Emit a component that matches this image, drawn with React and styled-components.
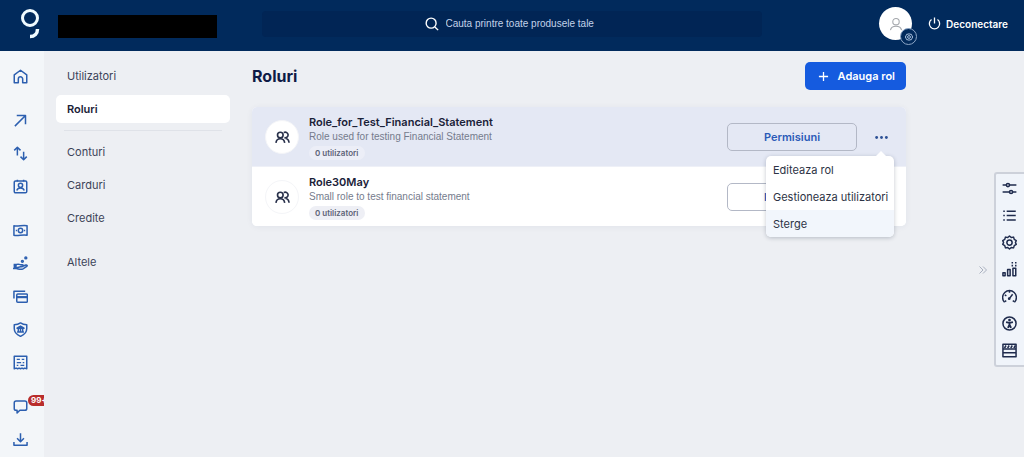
import { useState } from 'react';
import styled, { createGlobalStyle } from 'styled-components';

const GlobalStyle = createGlobalStyle`
    *, *::before, *::after {
        box-sizing: border-box;
    }
    body {
        margin: 0;
        background: #edeff3;
        color: #1d2540;
        font-family: Inter, "Liberation Sans", sans-serif;
        font-size: 12px;
    }
    button, input {
        font: inherit;
        color: inherit;
    }
    button {
        cursor: pointer;
    }
    a {
        color: inherit;
        text-decoration: none;
    }
    ul {
        list-style: none;
        margin: 0;
        padding: 0;
    }
`

const icons = {
    home: <path d="M2 9.500 12 2l10 7.500V22h-6.500v-6a3.500 3.500 0 0 0-7 0v6H2Z" />,
    arrow: <path d="M3 21 20 4M6 4h14v14" />,
    transfer: <path d="M7 15V2M2 7l5-5 5 5M17 9v13M12 17l5 5 5-5" />,
    contact: (
        <>
            <rect x="2" y="3" width="20" height="19" rx="2" />
            <circle cx="12" cy="10" r="3.400" />
            <path d="M6 18.500c1-3 3.500-4 6-4s5 1 6 4M7 1v3M17 1v3" />
        </>
    ),
    cash: (
        <>
            <path d="M1.500 4.500c6 1.500 14-1.500 21 0v15c-7-1.500-15 1.500-21 0Z" />
            <circle cx="12" cy="12" r="3.500" />
            <path d="M4.500 12h2M17.500 12h2" />
        </>
    ),
    hand: (
        <>
            <path d="M1 13.500h5c3-1.500 4 .5 6 .5h3c2 0 1.500 3-.5 3H11M15.500 16.500l5-2c2-.6 3 1 1.500 2L16 20.500c-4 2.500-8-.5-11-.5H1Z" />
            <path d="M1 16.700h5" strokeWidth="5" />
            <circle cx="15" cy="8.500" r="1.500" />
            <circle cx="20.500" cy="3" r="1.500" />
        </>
    ),
    cards: (
        <>
            <path d="M1.500 15V3.500h18" />
            <rect x="6" y="8" width="17" height="13" rx="1.500" />
            <path d="M6 13h17" strokeWidth="3.500" />
        </>
    ),
    shield: (
        <>
            <path d="M12 1.500c3 2 6 2.800 10 3v6c0 6-4 10-10 12.500C6 20.500 2 16.500 2 10.500v-6c4-.2 7-1 10-3Z" />
            <path d="m6.500 10 5.500-3.500 5.500 3.500ZM8.500 10v5M12 10v5M15.500 10v5M6.500 16h11" />
        </>
    ),
    receipt: (
        <>
            <path d="M2 22V2h20v20l-3-1-2.300 1-2.300-1-2.400 1-2.300-1-2.300 1L5 21Z" />
            <path d="M6 7h5M14 7h4M6 12h7M15.500 12H18M6 16.500h2.500M12 16.500h6" strokeWidth="2" />
        </>
    ),
    chat: <path d="M5 3h14a3 3 0 0 1 3 3v9a3 3 0 0 1-3 3h-8l-4.500 4.500V18H5a3 3 0 0 1-3-3V6a3 3 0 0 1 3-3Z" />,
    download: <path d="M12 2v13M6.500 10l5.500 5.500 5.500-5.500M1.500 16v5h21v-5" />,
    search: (
        <>
            <circle cx="10.500" cy="10.500" r="8.500" />
            <path d="m17 17 5.500 5.500" />
        </>
    ),
    power: <path d="M12 1v11M6.500 4.500a9.500 9.500 0 1 0 11 0" />,
    plus: <path d="M12 2v20M2 12h20" />,
    person: (
        <>
            <circle cx="12" cy="8" r="5.500" />
            <path d="M2.500 22.500c1-4.500 5-6.500 9.500-6.500s8.500 2 9.500 6.500" />
        </>
    ),
    people: (
        <>
            <circle cx="8.500" cy="8" r="4.500" />
            <path d="M1.500 20.500c.5-4.500 3-6.500 7-6.500s6.500 2 7 6.500M14 4.200a4.500 4.500 0 1 1 1 8M17 13.500c3.500.5 5.200 3 5.500 7" />
        </>
    ),
    dots: (
        <g fill="currentColor" stroke="none">
            <circle cx="3" cy="12" r="2.600" />
            <circle cx="12" cy="12" r="2.600" />
            <circle cx="21" cy="12" r="2.600" />
        </g>
    ),
    sliders: (
        <>
            <path d="M1 6.500h6M12 6.500h11M1 17.500h11M17 17.500h6" />
            <circle cx="9.500" cy="6.500" r="2.500" />
            <circle cx="14.500" cy="17.500" r="2.500" />
        </>
    ),
    list: <path d="M2 5h2.500M7.500 5H22M2 12h2.500M7.500 12H22M2 19h2.500M7.500 19H22" />,
    gear: (
        <>
            <path d="M12 1.500 14.800 4l3.700-.6 1.100 3.600 3.200 2L21.500 12l1.300 3-3.200 2-1.100 3.600-3.700-.6L12 22.500 9.200 20l-3.700.6L4.400 17l-3.200-2 1.300-3-1.300-3 3.200-2 1.100-3.600 3.700.6Z" />
            <circle cx="12" cy="12" r="4.200" />
        </>
    ),
    chart: (
        <>
            <path d="M1.500 17h3.500v5H1.500ZM9 12h4v10H9ZM17.500 10h4.500v12h-4.500Z" />
            <path d="M16.500 0v2.500M16.500 4.500V7M22 0v2.500M22 4.500V7" />
        </>
    ),
    gauge: (
        <>
            <path d="M4.500 20.500h-1A11 11 0 1 1 20.500 20.500h-1M5 20.500l1.500-2M19 20.500l-1.500-2M12 15l5-6.500M12 3v3M4.500 9.500l2.500 1.500" />
            <circle cx="11.500" cy="15.500" r="1" />
        </>
    ),
    access: (
        <>
            <circle cx="12" cy="12" r="10.500" />
            <circle cx="12" cy="6.500" r="1" fill="currentColor" />
            <path d="M6.500 9.800 12 11l5.500-1.200M12 11v4M12 14l-2.500 5M12 14l2.500 5" strokeWidth="3" />
        </>
    ),
    board: (
        <>
            <path d="M1.500 2h21v20h-21ZM1.500 9.500h21M1.500 15.500h21" />
            <path d="m4 8 2.500-4M9 8l2.500-4M14 8l2.500-4M19 8l2.500-4" />
        </>
    ),
}

const Icon = ({ name, size = 15, weight = 2 }) => (
    <svg
        width={size}
        height={size}
        viewBox="0 0 24 24"
        fill="none"
        stroke="currentColor"
        strokeWidth={weight}
        strokeLinejoin="round"
        aria-hidden="true"
    >
        {icons[name]}
    </svg>
)

const sideGroups = [
    [{ icon: 'home', label: 'Acasa' }],
    [
        { icon: 'arrow', label: 'Plati' },
        { icon: 'transfer', label: 'Transferuri' },
        { icon: 'contact', label: 'Beneficiari' },
    ],
    [
        { icon: 'cash', label: 'Conturi' },
        { icon: 'hand', label: 'Credite' },
        { icon: 'cards', label: 'Carduri' },
        { icon: 'shield', label: 'Garantii' },
        { icon: 'receipt', label: 'Rapoarte' },
    ],
    [
        { icon: 'chat', label: 'Mesaje', count: '99+' },
        { icon: 'download', label: 'Descarcari' },
    ],
]

const roles = [
    { name: 'Role_for_Test_Financial_Statement', text: 'Role used for testing Financial Statement', users: 0 },
    { name: 'Role30May', text: 'Small role to test financial statement', users: 0 },
]

const menuItems = ['Editeaza rol', 'Gestioneaza utilizatori', 'Sterge']

const tools = [
    ['sliders', 'Filtre'],
    ['list', 'Lista'],
    ['gear', 'Setari'],
    ['chart', 'Statistici'],
    ['gauge', 'Performanta'],
    ['access', 'Accesibilitate'],
    ['board', 'Panou'],
]

const RoleRow = ({ role, open, onToggle }) => (
    <Row $active={open}>
        <RoleIcon><Icon name="people" size={15} weight={2.600} /></RoleIcon>
        <RoleInfo>
            <h2>{role.name}</h2>
            <p>{role.text}</p>
            <UserCount $active={open}>{role.users} utilizatori</UserCount>
        </RoleInfo>
        <OutlineButton type="button">Permisiuni</OutlineButton>
        <MenuAnchor>
            <MoreButton type="button" aria-label="Mai multe" aria-expanded={open} onClick={onToggle}>
                <Icon name="dots" size={13} />
            </MoreButton>
            {open && (
                <Menu>
                    {menuItems.map((item) => (
                        <MenuItem key={item} type="button" $active={item === 'Sterge'}>{item}</MenuItem>
                    ))}
                </Menu>
            )}
        </MenuAnchor>
    </Row>
)

const App = () => {
    const [openRole, setOpenRole] = useState(roles[0].name)

    return (
        <>
            <GlobalStyle />
            <Header>
                <HeaderStart>
                    <a href="#acasa" aria-label="Acasa">
                        <svg width="20" height="30" viewBox="0 0 20 30" fill="none" stroke="#f0fbff" strokeWidth="3">
                            <circle cx="10" cy="9" r="7.500" />
                            <path d="M17.500 20c0 4.500-3 7.500-7.500 7.500" strokeWidth="3.500" />
                        </svg>
                    </a>
                    <AccountName />
                </HeaderStart>
                <Search>
                    <Icon name="search" size={14} weight={2.400} />
                    <input type="text" placeholder="Cauta printre toate produsele tale" aria-label="Cauta" />
                </Search>
                <HeaderEnd>
                    <Avatar type="button" aria-label="Profil">
                        <Icon name="person" size={14} weight={1.800} />
                        <AvatarBadge><Icon name="gear" size={8} weight={3} /></AvatarBadge>
                    </Avatar>
                    <Logout type="button">
                        <Icon name="power" size={13} weight={2.400} />
                        Deconectare
                    </Logout>
                </HeaderEnd>
            </Header>
            <Body>
                <Sidebar aria-label="Principal">
                    {sideGroups.map((group) => (
                        <ul key={group[0].icon}>
                            {group.map(({ icon, label, count }) => (
                                <li key={icon}>
                                    <a href={`#${icon}`} aria-label={label}>
                                        <Icon name={icon} size={15} weight={2.400} />
                                        {count && <Count>{count}</Count>}
                                    </a>
                                </li>
                            ))}
                        </ul>
                    ))}
                </Sidebar>
                <SubNav aria-label="Administrare">
                    <NavLink href="#utilizatori">Utilizatori</NavLink>
                    <NavLink href="#roluri" $active>Roluri</NavLink>
                    <Divider />
                    <NavLink href="#conturi">Conturi</NavLink>
                    <NavLink href="#carduri">Carduri</NavLink>
                    <NavLink href="#credite">Credite</NavLink>
                    <NavLink href="#altele" $spaced>Altele</NavLink>
                </SubNav>
                <Main>
                    <TitleBar>
                        <h1>Roluri</h1>
                        <PrimaryButton type="button">
                            <Icon name="plus" size={11} weight={2.800} />
                            Adauga rol
                        </PrimaryButton>
                    </TitleBar>
                    <Card>
                        {roles.map((role) => (
                            <RoleRow
                                key={role.name}
                                role={role}
                                open={openRole === role.name}
                                onToggle={() => setOpenRole(openRole === role.name ? null : role.name)}
                            />
                        ))}
                    </Card>
                </Main>
            </Body>
            <Dock>
                <Collapse type="button" aria-label="Ascunde">
                    <svg width="8" height="8" viewBox="0 0 8 8" fill="none" stroke="currentColor">
                        <path d="M.5.500 4 4 .5 7.500M4 .5 7.500 4 4 7.500" />
                    </svg>
                </Collapse>
                <Tools>
                    {tools.map(([icon, label]) => (
                        <button key={icon} type="button" aria-label={label}>
                            <Icon name={icon} size={15} weight={2.400} />
                        </button>
                    ))}
                </Tools>
            </Dock>
        </>
    )
}

const Header = styled.header`
    display: grid;
    grid-template-columns: 1fr minmax(200px, 500px) 1fr;
    align-items: center;
    height: 51px;
    padding: 0 16px 4px;
    background: #012a5c;
    color: #fff;
`

const HeaderStart = styled.div`
    display: flex;
    align-items: center;
    gap: 18px;
    padding-left: 4px;
    a {
        display: flex;
    }
`

const AccountName = styled.div`
    width: 159px;
    height: 23px;
    margin-top: 5px;
    background: #000;
`

const Search = styled.label`
    display: flex;
    align-items: center;
    justify-content: center;
    gap: 7px;
    height: 26px;
    border-radius: 4px;
    background: #012555;
    input {
        width: 154px;
        padding: 0;
        border: 0;
        outline: 0;
        background: none;
        font-family: "Liberation Sans", Arial, sans-serif;
        font-size: 10px;
        &::placeholder {
            color: #c3d3ea;
            opacity: 1;
        }
    }
`

const HeaderEnd = styled.div`
    display: flex;
    align-items: center;
    justify-content: flex-end;
    gap: 16px;
`

const Avatar = styled.button`
    position: relative;
    display: grid;
    place-items: center;
    width: 33px;
    height: 33px;
    padding: 0;
    border: 0;
    border-radius: 50%;
    background: #fff;
    color: #a3a6ab;
`

const AvatarBadge = styled.span`
    position: absolute;
    right: -5px;
    bottom: -5px;
    display: grid;
    place-items: center;
    width: 17px;
    height: 17px;
    border: 1px solid #8ea6c6;
    border-radius: 50%;
    background: #012a5c;
    color: #a9bfdc;
`

const Logout = styled.button`
    display: flex;
    align-items: center;
    gap: 5px;
    padding: 0;
    border: 0;
    background: none;
    font-size: 10px;
    font-weight: 600;
`

const Body = styled.div`
    display: flex;
    min-height: calc(100vh - 51px);
`

const Sidebar = styled.nav`
    display: flex;
    flex-direction: column;
    gap: 16px;
    flex: 0 0 44px;
    padding-top: 11px;
    overflow: hidden;
    background: #f3f6f9;
    color: #2c5fb0;
    ul {
        display: grid;
        gap: 5px;
    }
    a {
        position: relative;
        display: flex;
        align-items: center;
        height: 28px;
        padding-left: 13px;
    }
`

const Count = styled.span`
    position: absolute;
    top: 3px;
    left: 28px;
    padding: 0 3px;
    border-radius: 6px;
    background: #b92d2b;
    color: #fff;
    font-size: 8px;
    font-weight: 700;
    line-height: 11px;
`

const SubNav = styled.nav`
    display: flex;
    flex-direction: column;
    gap: 5px;
    flex: 0 0 174px;
    margin: 11px 22px 0 12px;
`

const NavLink = styled.a`
    height: 28px;
    margin-top: ${({ $spaced }) => ($spaced ? '11px' : '0')};
    padding: 0 11px;
    border-radius: 5px;
    background: ${({ $active }) => ($active ? '#fff' : 'none')};
    color: ${({ $active }) => ($active ? '#1a2138' : '#3c4358')};
    font-size: 11px;
    font-weight: ${({ $active }) => ($active ? 600 : 400)};
    line-height: 28px;
`

const Divider = styled.hr`
    width: 158px;
    height: 1px;
    margin: 2px auto;
    border: 0;
    background: #dfe2e8;
`

const Main = styled.main`
    flex: 1;
    min-width: 0;
    padding: 11px 118px 24px 0;
`

const TitleBar = styled.div`
    display: flex;
    align-items: center;
    justify-content: space-between;
    margin-bottom: 17px;
    h1 {
        margin: 0;
        color: #0f1b46;
        font-size: 16px;
        font-weight: 700;
        line-height: 28px;
    }
`

const PrimaryButton = styled.button`
    display: flex;
    align-items: center;
    gap: 9px;
    height: 28px;
    padding: 0 11px 0 13px;
    border: 0;
    border-radius: 5px;
    background: #155bdf;
    color: #fff;
    font-size: 11px;
    font-weight: 600;
`

const Card = styled.section`
    border-radius: 5px;
    background: #fff;
    box-shadow: 0 1px 6px rgba(30, 50, 100, 0.06);
`

const Row = styled.article`
    display: flex;
    align-items: center;
    padding: 7px 12px 6px 13px;
    border-radius: ${({ $active }) => ($active ? '5px 5px 0 0' : '0 0 5px 5px')};
    background: ${({ $active }) => ($active ? '#e4e8f4' : '#fff')};
    & + & {
        border-top: 1px solid #eef0f7;
    }
`

const RoleIcon = styled.span`
    display: grid;
    place-items: center;
    flex: none;
    width: 34px;
    height: 34px;
    border: 1px solid #f4f5f8;
    border-radius: 50%;
    background: #fff;
    color: #28304a;
`

const RoleInfo = styled.div`
    flex: 1;
    min-width: 0;
    margin-left: 10px;
    padding-top: 1px;
    h2, p {
        margin: 0;
        line-height: 14px;
    }
    h2 {
        color: #1a2138;
        font-size: 11px;
        font-weight: 600;
    }
    p {
        color: #757b8c;
        font-family: "Liberation Sans", Arial, sans-serif;
        font-size: 10px;
        line-height: 16px;
    }
`

const UserCount = styled.span`
    display: block;
    width: fit-content;
    margin-top: 1px;
    padding: 0 7px 0 6px;
    border-radius: 7px;
    background: ${({ $active }) => ($active ? '#eceef7' : '#eeeff5')};
    color: #5d6377;
    font-size: 8px;
    font-weight: 600;
    line-height: 14px;
`

const OutlineButton = styled.button`
    width: 130px;
    height: 28px;
    border: 1px solid #b3b8c6;
    border-radius: 5px;
    background: none;
    color: #2b5bb8;
    font-size: 11px;
    font-weight: 600;
`

const MenuAnchor = styled.div`
    position: relative;
    margin-left: 11px;
`

const MoreButton = styled.button`
    display: grid;
    place-items: center;
    width: 26px;
    height: 28px;
    padding: 0;
    border: 0;
    background: none;
    color: #2b4f94;
`

const Menu = styled.div`
    position: absolute;
    z-index: 1;
    top: 33px;
    right: 0;
    width: 128px;
    border-radius: 5px;
    background: #fff;
    box-shadow: 0 1px 4px rgba(20, 30, 60, 0.25);
    &::before {
        content: '';
        position: absolute;
        top: -5px;
        right: 8px;
        border: 5px solid transparent;
        border-top: 0;
        border-bottom-color: #fff;
    }
`

const MenuItem = styled.button`
    display: block;
    width: 100%;
    height: 27px;
    padding: 0 7px;
    border: 0;
    border-radius: 0 0 5px 5px;
    background: ${({ $active }) => ($active ? '#f2f6fc' : 'none')};
    color: #2d3345;
    font-size: 11px;
    text-align: left;
    white-space: nowrap;
`

const Dock = styled.aside`
    position: fixed;
    top: 172px;
    right: 0;
    display: flex;
    align-items: center;
    gap: 4px;
`

const Collapse = styled.button`
    display: flex;
    padding: 3px;
    border: 0;
    background: none;
    color: #a9b0bf;
`

const Tools = styled.div`
    display: grid;
    width: 30px;
    padding: 1px 1px 1px 0;
    border: 2px solid #cdd1da;
    border-right: 0;
    border-radius: 3px 0 0 3px;
    background: #f0f4fa;
    color: #1f2b4d;
    button {
        display: grid;
        place-items: center;
        height: 27px;
        padding: 0;
        border: 0;
        background: none;
    }
`

export default App
